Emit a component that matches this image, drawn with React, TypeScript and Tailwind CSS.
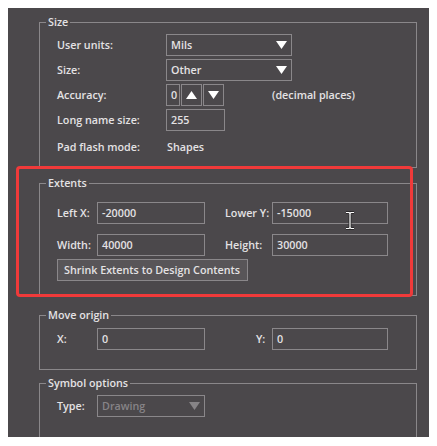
const BG = 'bg-[#4b484b]'

function Box({ legend, className, children }: { legend: string; className?: string; children: React.ReactNode }) {
  return (
    <div className={`relative ml-[31px] mr-[12px] border border-[#8a878a] ${className ?? ''}`}>
      <span className={`absolute left-[6px] top-[-9px] px-[2px] leading-[16px] ${BG}`}>{legend}</span>
      {children}
    </div>
  )
}

function Tri({ up, dim }: { up?: boolean; dim?: boolean }) {
  return (
    <svg width="11" height="8" viewBox="0 0 11 8">
      <polygon points={up ? '5.5,0 11,8 0,8' : '0,0 11,0 5.5,8'} fill={dim ? '#878487' : '#ffffff'} />
    </svg>
  )
}

function Field({ value, w }: { value: string; w: string }) {
  return (
    <div className={`h-[22px] ${w} border border-[#8a878a] pl-[4px] flex items-center`}>{value}</div>
  )
}

function Select({ value, w, dim }: { value: string; w: string; dim?: boolean }) {
  return (
    <div className={`h-[22px] ${w} border border-[#8a878a] pl-[4px] pr-[4px] flex items-center justify-between ${dim ? 'text-[#878487]' : ''}`}>
      <span>{value}</span>
      <Tri dim={dim} />
    </div>
  )
}

function Row({ label, children }: { label: string; children: React.ReactNode }) {
  return (
    <div className="flex items-center h-[22px]">
      <span className="w-[109px]">{label}</span>
      {children}
    </div>
  )
}

export default function App() {
  return (
    <div className="w-[437px] h-[446px] bg-white pt-[8px] pl-[8px]" style={{ fontFamily: '"Open Sans", sans-serif' }}>
      <div className={`relative w-[421px] h-[429px] overflow-hidden ${BG} text-[#e4e2e4] text-[10.75px] font-semibold pt-[14px]`}>
        <Box legend="Size" className="h-[146px] pt-[11px] pl-[17px]">
          <div className="flex flex-col gap-[3px]">
            <Row label="User units:"><Select value="Mils" w="w-[126px]" /></Row>
            <Row label="Size:"><Select value="Other" w="w-[126px]" /></Row>
            <Row label="Accuracy:">
              <div className="flex items-center gap-[1px]">
                <Field value="0" w="w-[14px]" />
                <div className="h-[22px] w-[21px] border border-[#8a878a] flex items-center justify-center"><Tri up /></div>
                <div className="h-[22px] w-[21px] border border-[#8a878a] flex items-center justify-center"><Tri /></div>
              </div>
              <span className="ml-[48px]">(decimal places)</span>
            </Row>
            <Row label="Long name size:"><Field value="255" w="w-[59px]" /></Row>
            <div className="mt-[2px]"><Row label="Pad flash mode:"><span className="pl-[1px]">Shapes</span></Row></div>
          </div>
        </Box>

        <Box legend="Extents" className="mt-[15px] h-[113px] pt-[18px] pl-[17px]">
          <div className="flex flex-col">
            <div className="flex items-center h-[22px]">
              <span className="w-[40px]">Left X:</span>
              <Field value="-20000" w="w-[108px]" />
              <span className="ml-[20px] w-[47px]">Lower Y:</span>
              <Field value="-15000" w="w-[116px]" />
            </div>
            <div className="flex items-center h-[22px] mt-[10px]">
              <span className="w-[40px]">Width:</span>
              <Field value="40000" w="w-[108px]" />
              <span className="ml-[20px] w-[47px]">Height:</span>
              <Field value="30000" w="w-[116px]" />
            </div>
            <button className="mt-[3px] self-start h-[22px] w-[191px] border border-[#8a878a] bg-[#585558] text-left pl-[6px]">
              Shrink Extents to Design Contents
            </button>
          </div>
        </Box>

        <Box legend="Move origin" className="mt-[19px] h-[55px] pt-[12px] pl-[17px]">
          <div className="flex items-center h-[22px]">
            <span className="w-[40px]">X:</span>
            <Field value="0" w="w-[108px]" />
            <span className="ml-[51px] w-[16px]">Y:</span>
            <Field value="0" w="w-[116px]" />
          </div>
        </Box>

        <Box legend="Symbol options" className="mt-[13px] h-[70px] pt-[11px] pl-[17px]">
          <div className="flex items-center h-[22px]">
            <span className="w-[40px]">Type:</span>
            <Select value="Drawing" w="w-[108px]" dim />
          </div>
        </Box>

        <div className="absolute left-[8px] top-[158px] w-[397px] h-[131px] border-[3px] border-[#f03a3a] rounded-[4px]" />

        <svg className="absolute left-[337px] top-[203px]" width="10" height="19" viewBox="0 0 10 19">
          <path d="M1 1.5h3l1 1 1-1h3M5 2.5v14M1 17.5h3l1-1 1 1h3" fill="none" stroke="#2a282a" strokeWidth="3" />
          <path d="M1 1.5h3l1 1 1-1h3M5 2.5v14M1 17.5h3l1-1 1 1h3" fill="none" stroke="#ffffff" strokeWidth="1.2" />
        </svg>
      </div>
    </div>
  )
}
